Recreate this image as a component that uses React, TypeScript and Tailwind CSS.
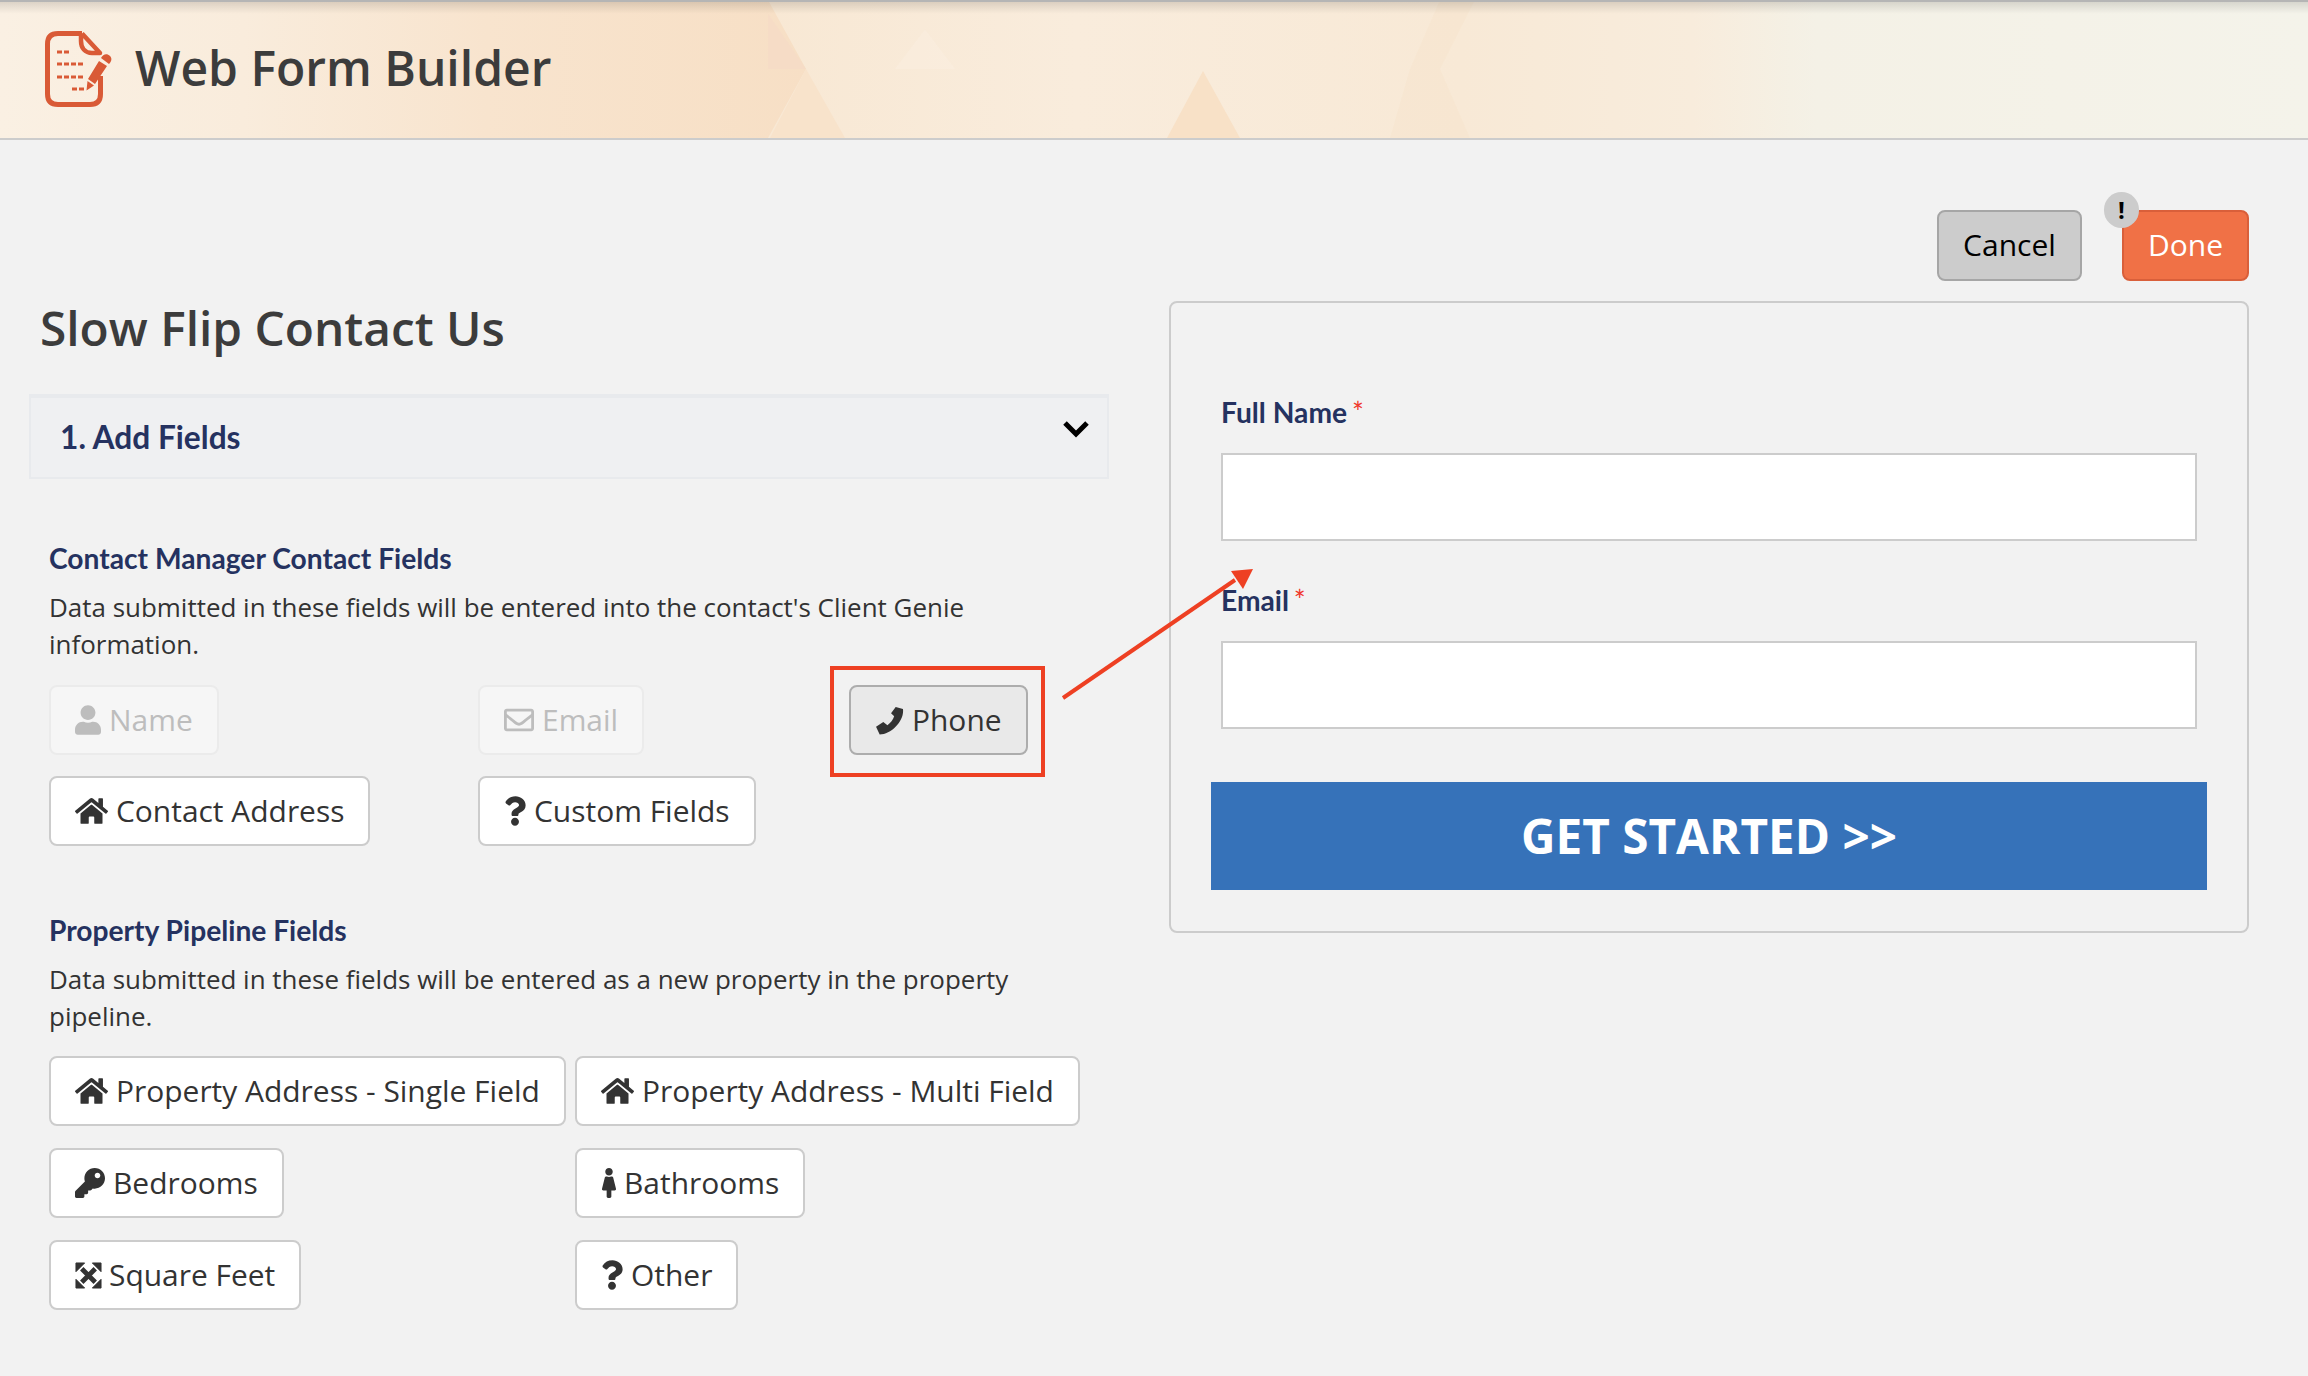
import { FaFemale, FaHome, FaKey, FaQuestion, FaRegEnvelope, FaUser } from 'react-icons/fa';
import type { ReactNode } from 'react';

interface FieldButtonProps {
  icon: ReactNode;
  label: string;
  disabled?: boolean;
  active?: boolean;
}

function FieldButton({ icon, label, disabled, active }: FieldButtonProps) {
  let tone = 'bg-white border-[#cccccc] text-[#333333]';
  if (disabled) tone = 'bg-[#f6f6f6] border-[#ebebeb] text-[#bdbdbd]';
  if (active) tone = 'bg-[#e9e9e9] border-[#adadad] text-[#333333]';
  return (
    <button className={`h-[70px] pl-[24px] pr-[24px] flex items-center gap-[8px] whitespace-nowrap border-2 rounded-[8px] text-[29.95px] ${tone}`}>
      {icon}
      <span>{label}</span>
    </button>
  );
}

function PhoneIcon() {
  return (
    <svg viewBox="0 0 28 28" className="w-[29px] h-[29px]" fill="currentColor">
      <path d="M20 1 L27 3 C28.5 14 16 27.5 4.5 27.5 L1 20 L8 15.5 L12 18.5 C15 16.5 17.5 13.5 18.5 10 L15.5 7 Z" />
    </svg>
  );
}

function ArrowsIcon() {
  return (
    <svg viewBox="0 0 28 28" className="w-[27px] h-[27px] -mr-[1px]" fill="currentColor">
      <path d="M7 7 L21 21 M21 7 L7 21" stroke="currentColor" strokeWidth="5" />
      <path d="M1 1 H10 L1 10 Z M27 1 V10 L18 1 Z M1 27 V18 L10 27 Z M27 27 H18 L27 18 Z" stroke="currentColor" strokeWidth="1" strokeLinejoin="round" />
    </svg>
  );
}

function Logo() {
  return (
    <svg viewBox="0 0 67 76" className="w-[67px] h-[76px] shrink-0">
      <path d="M37 2.5 H13 C6 2.5 2.5 6 2.5 13 V63 C2.5 70 6 73.5 13 73.5 H45 C52 73.5 55.5 70 55.5 63 V45" fill="none" stroke="#d95a36" strokeWidth="5" />
      <path d="M36 2.5 V10 C36 17 40 22 47 22 H55 L37 2.5" fill="none" stroke="#d95a36" strokeWidth="4.5" strokeLinejoin="round" />
      <path d="M12 21 H25 M12 33 H40 M12 46 H40 M27 58 H40" stroke="#d95a36" strokeWidth="3" strokeDasharray="5 2" fill="none" />
      <path d="M43 48 L54 30 L62 35 L50 53 Z M42.5 50 L49 54.5 L41.5 59.5 Z M56 27 C58 23 62 22 65 25 C67 27 67 30 64 33 Z" fill="#d95a36" />
    </svg>
  );
}

function HeaderPattern() {
  return (
    <svg viewBox="0 0 2308 140" preserveAspectRatio="none" className="absolute inset-0 w-full h-full">
      <defs>
        <linearGradient id="hdrLeft" gradientUnits="userSpaceOnUse" x1="0" x2="810" y1="0" y2="0">
          <stop offset="0" stopColor="#faf0e3" />
          <stop offset="0.3" stopColor="#f9ecdc" />
          <stop offset="0.6" stopColor="#f8e4ce" />
          <stop offset="1" stopColor="#f7dfc5" />
        </linearGradient>
        <linearGradient id="hdrRight" gradientUnits="userSpaceOnUse" x1="768" x2="2308" y1="0" y2="0">
          <stop offset="0" stopColor="#f8e8d4" />
          <stop offset="0.2" stopColor="#f9ecdc" />
          <stop offset="0.45" stopColor="#f8e9d6" />
          <stop offset="0.6" stopColor="#f8ecdc" />
          <stop offset="0.68" stopColor="#f4f1e6" />
          <stop offset="1" stopColor="#f4f3ea" />
        </linearGradient>
        <linearGradient id="top" x1="0" x2="0" y1="0" y2="1">
          <stop offset="0" stopColor="#000" stopOpacity="0.14" />
          <stop offset="1" stopColor="#000" stopOpacity="0" />
        </linearGradient>
      </defs>
      <rect width="2308" height="140" fill="url(#hdrLeft)" />
      <polygon points="768,0 806,70 768,140 2308,140 2308,0" fill="url(#hdrRight)" />
      <polygon points="768,14 806,70 768,70" fill="#f6dcc6" />
      <polygon points="806,70 770,140 845,140" fill="#f8e3cb" />
      <polygon points="925,30 895,70 955,70" fill="#fbf0e3" opacity="0.45" />
      <polygon points="1203,72 1167,140 1240,140" fill="#f8e1c7" />
      <polygon points="1440,0 1475,0 1440,70 1470,140 1390,140 1410,70" fill="#f6e3c9" opacity="0.35" />
      <rect width="2308" height="14" fill="url(#top)" />
      <rect width="2308" height="2" fill="#b5b5b5" />
    </svg>
  );
}

export default function App() {
  return (
    <div className="w-[2308px] h-[1376px] overflow-hidden bg-[#f2f2f2] font-['Open_Sans',sans-serif] text-[#333333] relative">
      <header className="relative h-[140px] border-b-2 border-[#cccccc] flex items-center pl-[45px]">
        <HeaderPattern />
        <div className="relative flex items-center gap-[23px]">
          <Logo />
          <h1 className="text-[48px] font-semibold text-[#3c3c3c] leading-none mb-[3px]">Web Form Builder</h1>
        </div>
      </header>

      <div className="flex justify-end gap-[40px] pr-[59px] pt-[70px] mb-[20px]">
        <button className="h-[71px] w-[145px] pb-[2px] rounded-[8px] border-2 border-[#a6a6a6] bg-[#cccccc] text-black text-[30px]">Cancel</button>
        <div className="relative">
          <button className="h-[71px] w-[127px] pb-[2px] rounded-[8px] border-2 border-[#d95f3a] bg-[#f07146] text-white text-[30px]">Done</button>
          <span className="absolute left-[-18px] top-[-18px] w-[35px] h-[36px] rounded-full bg-[#cccccc] text-black text-[24px] font-bold flex items-center justify-center">!</span>
        </div>
      </div>

      <div className="flex pl-[29px] pr-[59px] gap-[60px]">
        <div className="w-[1080px] shrink-0">
          <h2 className="pl-[11px] text-[47.8px] leading-[54px] font-semibold text-[#3c3c3c] h-[93px]">Slow Flip Contact Us</h2>
          <div className="h-[85px] border-2 border-[#e8eaed] border-t-4 bg-[#eff0f2] flex items-center justify-between pl-[29px] pr-[17px]">
            <span className="font-['Lato',sans-serif] font-bold text-[31.7px] text-[#253260]">1. Add Fields</span>
            <svg viewBox="0 0 28 20" className="w-[28px] h-[20px] mb-[17px]"><path d="M3 4 L14 15 L25 4" fill="none" stroke="#000" strokeWidth="5" /></svg>
          </div>

          <div className="pl-[20px] pt-[59px]">
            <h3 className="font-['Lato',sans-serif] font-bold text-[28.2px] leading-[40px] text-[#253260]">Contact Manager Contact Fields</h3>
            <p className="text-[25.96px] leading-[37px] mt-[11px] w-[1000px]">Data submitted in these fields will be entered into the contact's Client Genie information.</p>
            <div className="grid grid-cols-[429px_371px_auto] gap-y-[21px] justify-start justify-items-start mt-[22px]">
              <FieldButton disabled icon={<FaUser className="w-[26px] h-[30px]" />} label="Name" />
              <FieldButton disabled icon={<FaRegEnvelope className="w-[30px] h-[30px]" />} label="Email" />
              <FieldButton active icon={<PhoneIcon />} label="Phone" />
              <FieldButton icon={<FaHome className="w-[33px] h-[30px]" />} label="Contact Address" />
              <FieldButton icon={<FaQuestion className="w-[22px] h-[30px]" />} label="Custom Fields" />
            </div>

            <h3 className="font-['Lato',sans-serif] font-bold text-[28.2px] leading-[40px] text-[#253260] mt-[64px]">Property Pipeline Fields</h3>
            <p className="text-[25.96px] leading-[37px] mt-[11px] w-[1000px]">Data submitted in these fields will be entered as a new property in the property pipeline.</p>
            <div className="grid grid-cols-[526px_auto] gap-y-[22px] justify-start justify-items-start mt-[21px]">
              <FieldButton icon={<FaHome className="w-[33px] h-[30px]" />} label="Property Address - Single Field" />
              <FieldButton icon={<FaHome className="w-[33px] h-[30px]" />} label="Property Address - Multi Field" />
              <FieldButton icon={<FaKey className="w-[30px] h-[30px]" />} label="Bedrooms" />
              <FieldButton icon={<FaFemale className="w-[16px] h-[30px] -mr-[1px]" />} label="Bathrooms" />
              <FieldButton icon={<ArrowsIcon />} label="Square Feet" />
              <FieldButton icon={<FaQuestion className="w-[22px] h-[30px]" />} label="Other" />
            </div>
          </div>
        </div>

        <div className="w-[1080px] h-[632px] border-2 border-[#cccccc] rounded-[8px] px-[40px] pt-[89px]">
          <div className="pl-[10px] pr-[10px]">
            <label className="block font-['Lato',sans-serif] font-bold text-[28.2px] leading-[40px] text-[#253260]">Full Name <span className="text-[#f0372a] font-normal text-[28px] align-top -ml-[2px]">*</span></label>
            <input className="block w-full h-[88px] mt-[21px] bg-white border-2 border-[#cccccc]" />
            <label className="block font-['Lato',sans-serif] font-bold text-[28.2px] leading-[40px] text-[#253260] mt-[39px]">Email <span className="text-[#f0372a] font-normal text-[28px] align-top -ml-[2px]">*</span></label>
            <input className="block w-full h-[88px] mt-[21px] bg-white border-2 border-[#cccccc]" />
          </div>
          <button className="mt-[53px] w-full h-[108px] bg-[#3672b9] text-white font-bold text-[47.7px]">GET STARTED &gt;&gt;</button>
        </div>
      </div>

      {/* annotation drawn over the page */}
      <div className="absolute left-[830px] top-[666px] w-[215px] h-[111px] border-[4px] border-[#ee4023]" />
      <svg className="absolute left-0 top-0 w-[2308px] h-[1376px] pointer-events-none" viewBox="0 0 2308 1376">
        <line x1="1063" y1="698" x2="1235" y2="580" stroke="#ee4023" strokeWidth="4" />
        <polygon points="1253,569 1231,571 1243,589" fill="#ee4023" />
      </svg>
    </div>
  );
}
